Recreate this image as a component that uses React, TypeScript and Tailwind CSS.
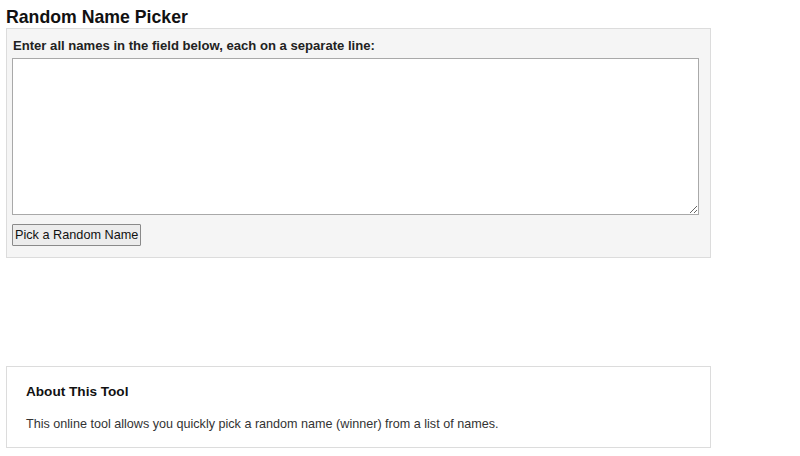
import React from 'react';

const App = () => {
  return (
    <div className="w-[800px] h-[456px] bg-white px-[6px] pt-[7px] font-['Liberation_Sans',Arial,sans-serif] text-[#111]">
      <h1 className="text-[17.7px] font-bold leading-[20px] text-[#111]">Random Name Picker</h1>

      {/* Picker panel */}
      <div className="mt-[1px] w-[705px] h-[230px] border border-[#dcdcdc] bg-[#f5f5f5] px-[5px] pt-[9px]">
        <label className="block text-[13.1px] font-bold leading-[15px] pl-[1px] text-[#222]">
          Enter all names in the field below, each on a separate line:
        </label>
        <textarea className="mt-[5px] block w-[687px] h-[157px] border border-[#a9a9a9] bg-white resize-y" />
        <button className="mt-[9px] block h-[22px] px-[2px] border border-[#8a8a8a] bg-[#ececec] text-[12.7px] leading-[20px] text-[#111] rounded-[1px]">
          Pick a Random Name
        </button>
      </div>

      {/* About box */}
      <div className="mt-[108px] w-[705px] h-[82px] border border-[#dcdcdc] bg-white px-[19px] pt-[16px]">
        <h2 className="text-[13.6px] font-bold leading-[17px] text-[#111]">About This Tool</h2>
        <p className="mt-[17px] text-[12.6px] leading-[15px] text-[#333]">
          This online tool allows you quickly pick a random name (winner) from a list of names.
        </p>
      </div>
    </div>
  );
};

export default App;
